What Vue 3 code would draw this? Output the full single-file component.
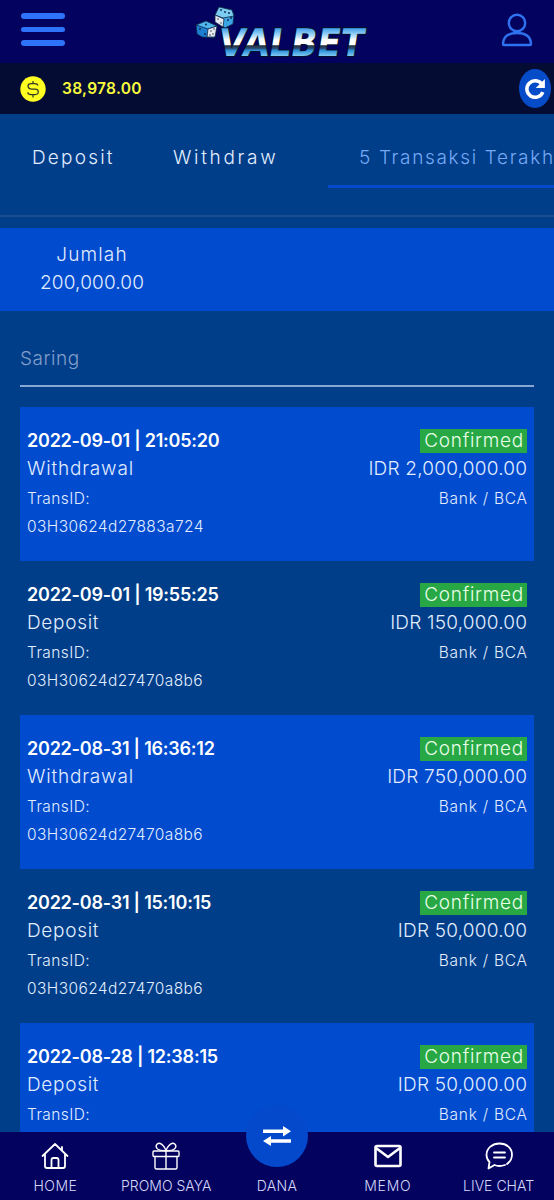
<script setup>
const tabs = [
  { label: 'Deposit', cls: 'tab-deposit' },
  { label: 'Withdraw', cls: 'tab-withdraw' },
  { label: '5 Transaksi Terakhir', cls: 'tab-last', active: true }
]

const transactions = [
  { date: '2022-09-01 | 21:05:20', type: 'Withdrawal', id: '03H30624d27883a724', amount: 'IDR 2,000,000.00' },
  { date: '2022-09-01 | 19:55:25', type: 'Deposit', id: '03H30624d27470a8b6', amount: 'IDR 150,000.00' },
  { date: '2022-08-31 | 16:36:12', type: 'Withdrawal', id: '03H30624d27470a8b6', amount: 'IDR 750,000.00' },
  { date: '2022-08-31 | 15:10:15', type: 'Deposit', id: '03H30624d27470a8b6', amount: 'IDR 50,000.00' },
  { date: '2022-08-28 | 12:38:15', type: 'Deposit', id: '03H30624d27470a8b6', amount: 'IDR 50,000.00' }
]
</script>

<template>
  <div class="screen">
    <header class="topbar">
      <div class="menu"><i></i><i></i><i></i></div>
      <svg class="logo" viewBox="0 0 200 64">
        <defs>
          <linearGradient id="chrome" gradientUnits="userSpaceOnUse" x1="0" y1="28" x2="0" y2="57">
            <stop offset="0" stop-color="#3d9be6" />
            <stop offset=".2" stop-color="#8fcdf6" />
            <stop offset=".42" stop-color="#ffffff" />
            <stop offset=".58" stop-color="#ffffff" />
            <stop offset=".61" stop-color="#26303f" />
            <stop offset=".7" stop-color="#2a4a70" />
            <stop offset=".77" stop-color="#2a8fd9" />
            <stop offset="1" stop-color="#8ed4f7" />
          </linearGradient>
        </defs>
        <text class="wordmark" x="0" y="56.500" textLength="145" lengthAdjust="spacingAndGlyphs" transform="translate(46 0) skewX(-9)">VALBET</text>
        <g stroke="#0a2445" stroke-width=".8" stroke-linejoin="round">
          <path d="M39 7 52 10 54 15 53 24 45 28 36 22 35 16Z" fill="#3ba4e2" />
          <path d="M39 7 52 10 54 16 43 18 35 15Z" fill="#7cccf2" />
          <path d="M35 15 44 19 43 27 35 22Z" fill="#e6e9ef" />
          <path d="M16 25 26 21 37 26 34 38 22 37 17 34Z" fill="#1d7ed2" />
          <path d="M16 25 26 21 37 26 28 29Z" fill="#4eb5ec" />
          <path d="M28 29 37 26 35 37 27 37Z" fill="#e6e9ef" />
        </g>
        <g fill="#0a2445">
          <circle cx="41" cy="10" r=".9" /><circle cx="49" cy="13" r=".9" /><circle cx="45" cy="12" r=".9" />
          <circle cx="48" cy="20" r=".9" /><circle cx="51" cy="18" r=".9" /><circle cx="38" cy="19" r=".7" />
          <circle cx="41" cy="23" r=".7" /><circle cx="20" cy="29" r=".9" /><circle cx="25" cy="34" r=".9" />
          <circle cx="26" cy="24.5" r=".9" /><circle cx="31" cy="31" r=".7" /><circle cx="34" cy="29" r=".7" />
          <circle cx="30" cy="35" r=".7" /><circle cx="33" cy="34" r=".7" />
        </g>
      </svg>
      <svg class="user" viewBox="0 0 32 34" fill="none" stroke="#2f72f0" stroke-width="2.4" stroke-linejoin="round">
        <circle cx="16" cy="10" r="8.2" />
        <path d="M2 31Q2.5 20 16 20T30 31Q30 32 29 32H3Q2 32 2 31Z" />
      </svg>
    </header>

    <div class="balance">
      <svg class="coin" viewBox="0 0 26 26">
        <circle cx="13" cy="13" r="12.7" fill="#ffff22" />
        <path d="M18 9.5Q17.5 7.5 15 7.5H11Q8 7.5 8 10T11 13H15Q18.3 13 18.3 15.8T15 18.5H11Q8 18.5 7.7 16.3M13 5V7.5M13 18.5V21.4" fill="none" stroke="#343b25" stroke-width="1.25" />
      </svg>
      <span class="balance-amount">38,978.00</span>
      <div class="refresh">
        <svg viewBox="0 0 24 24"><path d="M19.6 7A9 9 0 1 0 20.5 15.4" fill="none" stroke="#fff" stroke-width="3.8" /><path d="M22.8 1.2V11H12.8Z" fill="#fff" /></svg>
      </div>
    </div>

    <nav class="tabs">
      <div v-for="t in tabs" :key="t.label" class="tab" :class="[t.cls, { active: t.active }]">{{ t.label }}</div>
    </nav>

    <section class="summary">
      <div class="summary-box">
        <div class="summary-label">Jumlah</div>
        <div class="summary-value">200,000.00</div>
      </div>
    </section>

    <div class="filter">Saring</div>

    <main class="list">
      <article v-for="(t, i) in transactions" :key="i" class="card">
        <div class="left">
          <div class="date">{{ t.date }}</div>
          <div class="kind" :class="t.type.toLowerCase()">{{ t.type }}</div>
          <div class="small trans">TransID:</div>
          <div class="small code">{{ t.id }}</div>
        </div>
        <div class="right">
          <div class="line"><span class="badge">Confirmed</span></div>
          <div class="amount">{{ t.amount }}</div>
          <div class="small bank">Bank / BCA</div>
        </div>
      </article>
    </main>

    <footer class="bottom">
      <div class="item">
        <svg viewBox="0 0 28 28" class="icon"><path d="M1.5 14 14 2 26.5 14M4 12V24Q4 26 6 26H22Q24 26 24 24V12M21 8.5V5M10.5 26V18Q10.5 16 12.5 16H15.5Q17.5 16 17.5 18V26" /></svg>
        <span class="l-home">HOME</span>
      </div>
      <div class="item">
        <svg viewBox="0 0 28 28" class="icon gift"><rect x="1" y="9" width="26" height="5.5" rx="1" /><path d="M3 14.5V25.5Q3 27 4.500 27H23.500Q25 27 25 25.500V14.500M14 9V27M14 8.500Q9 9 5.500 7Q3 4.500 5 2.200Q7.500 0 11 3.500Q13 5.500 14 8.500Q19 9 22.500 7Q25 4.500 23 2.200Q20.500 0 17 3.500Q15 5.500 14 8.500" /></svg>
        <span class="l-promo">PROMO SAYA</span>
      </div>
      <div class="item">
        <div class="dana">
          <svg viewBox="0 0 28 20"><path d="M0 3.500H20V0L28 5.200 20 10.400V7H0ZM28 13.300H8V10L0 15 8 20V16.800H28Z" fill="#fff" /></svg>
        </div>
        <i class="icon"></i>
        <span class="l-dana">DANA</span>
      </div>
      <div class="item">
        <svg viewBox="0 0 28 28" class="icon memo"><rect x="1.500" y="4" width="25" height="20" rx="1.500" /><path d="M2 6 14 15 26 6" /></svg>
        <span class="l-memo">MEMO</span>
      </div>
      <div class="item">
        <svg viewBox="0 0 28 28" class="icon chat"><path d="M22 22Q27 18.500 27 12.500C27 6 21.500 1.500 14.500 1.500S1.500 6 1.500 13Q1.500 17 4.500 20L3.500 26.500 9.500 23Q14 25 20 23M9 10.500H20M9 15.500H20" /></svg>
        <span class="l-chat">LIVE CHAT</span>
      </div>
    </footer>
  </div>
</template>

<style>
html, body { margin: 0; background: #003e89; overflow: hidden; }
</style>

<style scoped>
.screen { position: relative; width: 554px; height: 1200px; overflow: hidden; background: #003e89; color: #e2edff; font: 300 19px/28px Inter, "Open Sans", sans-serif; white-space: nowrap; }
.topbar { height: 63px; display: flex; background: #03035f; padding-left: 21px; box-sizing: border-box; }
.menu { width: 44px; padding-top: 13px; display: flex; flex-direction: column; gap: 8px; }
.menu i { height: 5.6px; border-radius: 3px; background: #2d74fb; }
.logo { width: 200px; height: 64px; margin-left: 115px; }
.wordmark { font: bold 38px/1 "DejaVu Sans", sans-serif; fill: url(#chrome); stroke: #061127; stroke-width: 2px; paint-order: stroke; }
.user { width: 32px; height: 34px; margin: 13px 0 0 121px; }
.balance { height: 51px; display: flex; align-items: center; background: #040c34; padding-left: 20px; box-sizing: border-box; }
.coin { width: 26px; height: 26px; }
.balance-amount { margin-left: 16px; width: 80px; font-size: 15.5px; font-weight: 600; color: #f8fb3d; letter-spacing: .3px; }
.refresh { width: 32px; height: 39px; border-radius: 50%; background: #064bc8; margin-left: 377px; display: flex; justify-content: center; align-items: center; flex: none; }
.refresh svg { width: 22px; height: 22px; }
.tabs { height: 101px; border-bottom: 2px solid #1b4f91; display: flex; overflow: hidden; }
.tab { height: 71px; line-height: 88px; flex: none; box-sizing: content-box; }
.tab-deposit { width: 141px; padding-left: 32px; letter-spacing: 2.2px; }
.tab-withdraw { width: 155px; letter-spacing: 2.7px; }
.tab-last { width: 231px; padding-left: 31px; color: #76a9f5; border-bottom: 3px solid #0449cb; letter-spacing: 1.65px; }
.summary { margin-top: 11px; height: 83px; background: #004bce; padding: 13px 0 0 40px; box-sizing: border-box; }
.summary-box { width: 104px; text-align: center; }
.summary-label { letter-spacing: 1.15px; }
.summary-value { letter-spacing: .15px; }
.filter { margin: 0 20px; height: 76px; line-height: 95px; border-bottom: 2px solid #87a6d6; box-sizing: border-box; color: #829fc9; letter-spacing: .55px; }
.list { margin: 20px 20px 0; }
.card { height: 154px; box-sizing: border-box; padding: 20px 7px 0; display: flex; justify-content: space-between; }
.card:nth-child(odd) { background: #004bce; }
.right { text-align: right; }
.date { font-weight: 600; color: #fff; font-size: 18px; letter-spacing: -.23px; }
.withdrawal { letter-spacing: .82px; }
.deposit { letter-spacing: .7px; }
.small { font-size: 15.5px; line-height: 31px; }
.trans { letter-spacing: .4px; }
.code { line-height: 25px; letter-spacing: .4px; }
.bank { letter-spacing: .75px; margin-right: -.75px; }
.amount { letter-spacing: .22px; margin-right: -.22px; }
.line { height: 28px; }
.badge { display: inline-block; background: #28a745; height: 24px; line-height: 24px; padding: 0 3px 0 4px; margin-top: 2px; color: #e9ffe9; letter-spacing: .72px; }
.bottom { position: absolute; left: 0; right: 0; bottom: 0; height: 68px; background: #03025f; display: grid; grid-template-columns: repeat(5, 1fr); font-size: 14px; font-weight: 300; line-height: 18px; color: #d5d8fb; }
.item { position: relative; display: flex; flex-direction: column; align-items: center; padding-top: 10px; }
.icon { width: 28px; height: 28px; margin-bottom: 7px; fill: none; stroke: #fff; stroke-width: 1.8; stroke-linejoin: round; stroke-linecap: round; }
.gift { stroke-width: 1.4; }
.memo { stroke-width: 2.6; }
.l-home { letter-spacing: .5px; }
.l-dana { letter-spacing: .3px; }
.l-memo { letter-spacing: .7px; }
.dana { position: absolute; top: -27px; width: 62px; height: 62px; border-radius: 50%; background: #0449cb; display: flex; justify-content: center; align-items: center; }
.dana svg { width: 28px; height: 20px; }
</style>
